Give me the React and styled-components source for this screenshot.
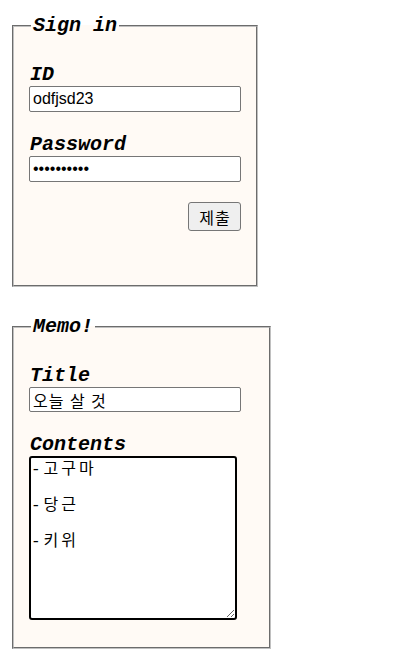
import React from "react";
import styled, { createGlobalStyle } from "styled-components";

const Global = createGlobalStyle`
  body {
    margin: 8px;
    background: #ffffff;
    font-family: "Liberation Sans", "Noto Sans CJK KR", sans-serif;
  }
`;

const Page = styled.div`
  display: flex;
  flex-direction: column;
  align-items: flex-start;
  gap: 28px;
  padding: 6px 0 0 4px;
`;

const Fieldset = styled.fieldset`
  box-sizing: border-box;
  width: ${(p) => p.$width}px;
  margin: 0;
  padding: 27px 15px ${(p) => p.$bottom}px;
  border: 2px groove #c0c0c0;
  background: #fffaf5;
  display: flex;
  flex-direction: column;
`;

const Legend = styled.legend`
  font-family: "Liberation Mono", "Courier New", monospace;
  font-weight: bold;
  font-style: italic;
  font-size: 20px;
  line-height: 23px;
  padding: 0 2px;
  margin-left: 2px;
  color: #000;
`;

const Label = styled.label`
  display: block;
  font-family: "Liberation Mono", "Courier New", monospace;
  font-weight: bold;
  font-style: italic;
  font-size: 20px;
  line-height: 22px;
  margin-top: ${(p) => (p.$first ? 0 : 22)}px;
  padding-left: 1px;
  color: #000;
`;

const TextInput = styled.input`
  box-sizing: border-box;
  width: 212px;
  height: ${(p) => p.$h || 26}px;
  margin: 0;
  padding: 1px 3px;
  border: 1px solid #767676;
  border-radius: 2px;
  background: #fff;
  font-family: "Liberation Sans", "Noto Sans CJK KR", sans-serif;
  font-size: 16px;
  letter-spacing: ${(p) => p.$spacing || 0}px;
  color: #000;
  outline: none;
`;

const ButtonRow = styled.div`
  display: flex;
  justify-content: flex-end;
  width: 212px;
  margin-top: 20px;
`;

const Button = styled.button`
  box-sizing: border-box;
  width: 53px;
  height: 29px;
  padding: 0 0 0 1px;
  border: 1px solid #767676;
  border-radius: 3px;
  background: #efefef;
  font-family: "Noto Sans CJK KR", sans-serif;
  font-size: 16px;
  letter-spacing: 1px;
  color: #000;
`;

const TextArea = styled.textarea`
  box-sizing: border-box;
  width: 208px;
  height: 164px;
  margin: 0;
  padding: 3px 0 0;
  border: 2px solid #000;
  border-radius: 3px;
  background: #fff;
  font-family: "Liberation Mono", "Noto Sans CJK KR", monospace;
  font-size: 16px;
  line-height: 18px;
  letter-spacing: 3px;
  color: #000;
  outline: none;
  resize: both;
`;

export default function App() {
  return (
    <>
      <Global />
      <Page>
        <Fieldset $width={246} $bottom={54}>
          <Legend>Sign in</Legend>
          <Label $first htmlFor="id">ID</Label>
          <TextInput id="id" type="text" defaultValue="odfjsd23" />
          <Label htmlFor="pw">Password</Label>
          <TextInput id="pw" type="password" defaultValue="1234567890" />
          <ButtonRow>
            <Button type="button">제출</Button>
          </ButtonRow>
        </Fieldset>
        <Fieldset $width={259} $bottom={27}>
          <Legend>Memo!</Legend>
          <Label $first htmlFor="title">Title</Label>
          <TextInput id="title" type="text" $h={25} $spacing={1} defaultValue="오늘 살 것" />
          <Label htmlFor="contents">Contents</Label>
          <TextArea
            id="contents"
            defaultValue={"-고구마\n\n-당근\n\n-키위"}
          />
        </Fieldset>
      </Page>
    </>
  );
}
